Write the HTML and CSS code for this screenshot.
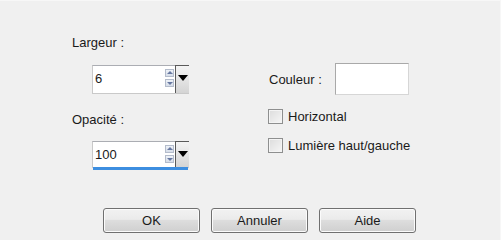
FILE: index.html
```html
<!DOCTYPE html>
<html lang="fr">

<head>
    <meta charset="UTF-8">
    <title>Ombre</title>
    <link rel="stylesheet" href="styles.css">
</head>

<body>
    <div class="dialog">
        <div class="fields">
            <div class="col-left">
                <div class="label">Largeur :</div>
                <div class="spin">
                    <div class="spin-value">6</div>
                    <div class="spin-arrows">
                        <span class="arrow up"></span>
                        <span class="arrow down"></span>
                    </div>
                    <div class="spin-drop"></div>
                </div>

                <div class="label label-second">Opacité :</div>
                <div class="spin spin-active">
                    <div class="spin-value">100</div>
                    <div class="spin-arrows">
                        <span class="arrow up"></span>
                        <span class="arrow down"></span>
                    </div>
                    <div class="spin-drop"></div>
                </div>
            </div>

            <div class="col-right">
                <div class="color-row">
                    <span>Couleur :</span>
                    <div class="color-box"></div>
                </div>
                <label class="check first-check"><span class="box"></span>Horizontal</label>
                <label class="check"><span class="box"></span>Lumière haut/gauche</label>
            </div>
        </div>

        <div class="buttons">
            <button class="btn">OK</button>
            <button class="btn">Annuler</button>
            <button class="btn">Aide</button>
        </div>
    </div>
</body>

</html>
```

FILE: styles.css
```css
* {
    box-sizing: border-box;
    margin: 0;
    padding: 0;
}

body {
    font-family: "Liberation Sans", Arial, sans-serif;
    font-size: 13px;
    line-height: 15px;
    color: #1a1a1a;
    background-color: #f0f0f0;
    width: 501px;
    height: 240px;
    overflow: hidden;
    border-top: 1px solid #f7f7f7;
    border-right: 1px solid #f7f7f7;
}

.dialog {
    padding-top: 34px;
}

.fields {
    display: flex;
}

/* left column: two spin boxes */
.col-left {
    width: 196px;
    margin-left: 72px;
}

.label-second {
    margin-top: 18px;
}

.spin {
    position: relative;
    display: flex;
    width: 97px;
    height: 29px;
    margin-left: 20px;
    margin-top: 15px;
    background-color: #fff;
    border: 1px solid #c9c9c9;
    border-top-color: #abadb3;
}

.label-second + .spin {
    margin-top: 14px;
    height: 27px;
}

.spin-active::after {
    content: "";
    position: absolute;
    left: 0;
    right: 0;
    bottom: -3px;
    height: 3px;
    background-color: #3d8ee0;
}

.spin-value {
    flex: 1;
    padding: 5px 0 0 2px;
}

.spin-arrows {
    display: flex;
    flex-direction: column;
    gap: 2px;
    padding-top: 3px;
    margin-right: 1px;
}

.arrow {
    position: relative;
    width: 9px;
    height: 8px;
    border: 1px solid #b4bccb;
    background: linear-gradient(#eef2f8, #d6dde9);
}

.arrow::after {
    content: "";
    position: absolute;
    left: 1px;
    border-left: 3px solid transparent;
    border-right: 3px solid transparent;
}

.arrow.up::after {
    top: 1px;
    border-bottom: 3px solid #6677a0;
}

.arrow.down::after {
    top: 2px;
    border-top: 3px solid #6677a0;
}

.spin-drop {
    position: relative;
    width: 14px;
    margin-top: -1px;
    margin-right: -1px;
    border-left: 1px solid #5a5a5a;
    border-top: 1px solid #5a5a5a;
    background: linear-gradient(#f4f4f4, #d4d4d4);
}

.spin-drop::after {
    content: "";
    position: absolute;
    left: 2px;
    top: 9px;
    border-left: 5px solid transparent;
    border-right: 5px solid transparent;
    border-top: 6px solid #000;
}

/* right column */
.col-right {
    display: flex;
    flex-direction: column;
}

.color-row {
    display: flex;
    align-items: center;
    gap: 13px;
    margin-top: 28px;
    margin-left: 1px;
}

.color-box {
    width: 74px;
    height: 32px;
    background-color: #fff;
    border: 1px solid #d6d6d6;
    border-top-color: #a9a9a9;
    border-left-color: #a9a9a9;
}

.check {
    display: flex;
    align-items: center;
    gap: 5px;
    margin-top: 14px;
}

.first-check {
    margin-top: 14px;
}

.box {
    width: 15px;
    height: 15px;
    border: 1px solid #8e8f8f;
    background: linear-gradient(135deg, #dcdcdc, #f6f6f6);
    box-shadow: inset 0 0 0 1px #f4f4f4;
}

/* buttons */
.buttons {
    display: flex;
    gap: 11px;
    margin-top: 40px;
    margin-left: 103px;
}

.btn {
    width: 97px;
    height: 25px;
    font-family: "Liberation Sans", Arial, sans-serif;
    font-size: 13px;
    color: #1a1a1a;
    border: 1px solid #707070;
    border-radius: 3px;
    background: linear-gradient(#f2f2f2 0%, #ebebeb 45%, #dddddd 50%, #cfcfcf 100%);
    box-shadow: inset 0 0 0 1px #fbfbfb;
}
```
